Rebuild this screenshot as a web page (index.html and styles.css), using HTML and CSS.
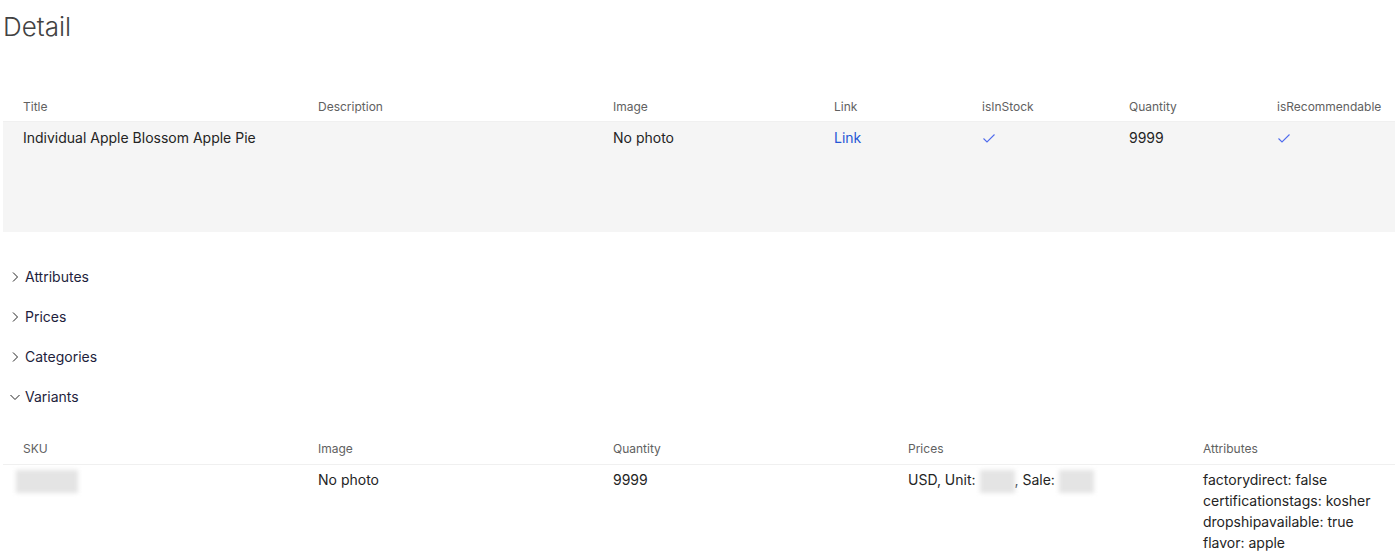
FILE: index.html
```html
<!DOCTYPE html>
<html lang="en">
<head>
  <meta charset="UTF-8" />
  <title>Detail</title>
  <link rel="stylesheet" href="styles.css">
</head>
<body>
  <div class="page">
    <h1 class="page-title">Detail</h1>

    <table class="grid product">
      <colgroup>
        <col style="width:295px"><col style="width:295px"><col style="width:221px">
        <col style="width:148px"><col style="width:147px"><col style="width:148px"><col>
      </colgroup>
      <thead>
        <tr>
          <th>Title</th>
          <th>Description</th>
          <th>Image</th>
          <th>Link</th>
          <th>isInStock</th>
          <th>Quantity</th>
          <th>isRecommendable</th>
        </tr>
      </thead>
      <tbody>
        <tr class="selected">
          <td>Individual Apple Blossom Apple Pie</td>
          <td></td>
          <td>No photo</td>
          <td><a href="#" class="link">Link</a></td>
          <td><svg class="check" width="14" height="14" viewBox="0 0 14 14"><path d="M1.5 7.5 L5 11 L12.5 3.5" fill="none" stroke="currentColor" stroke-width="1.1"/></svg></td>
          <td>9999</td>
          <td><svg class="check" width="14" height="14" viewBox="0 0 14 14"><path d="M1.5 7.5 L5 11 L12.5 3.5" fill="none" stroke="currentColor" stroke-width="1.1"/></svg></td>
        </tr>
      </tbody>
    </table>

    <div class="sections">
      <div class="section-head">
        <svg class="chevron" width="12" height="12" viewBox="0 0 12 12"><path d="M4 1.5 L8.5 6 L4 10.5" fill="none" stroke="currentColor" stroke-width="1"/></svg>
        <span>Attributes</span>
      </div>
      <div class="section-head">
        <svg class="chevron" width="12" height="12" viewBox="0 0 12 12"><path d="M4 1.5 L8.5 6 L4 10.5" fill="none" stroke="currentColor" stroke-width="1"/></svg>
        <span>Prices</span>
      </div>
      <div class="section-head">
        <svg class="chevron" width="12" height="12" viewBox="0 0 12 12"><path d="M4 1.5 L8.5 6 L4 10.5" fill="none" stroke="currentColor" stroke-width="1"/></svg>
        <span>Categories</span>
      </div>
      <div class="section-head">
        <svg class="chevron" width="12" height="12" viewBox="0 0 12 12"><path d="M1.5 4 L6 8.5 L10.5 4" fill="none" stroke="currentColor" stroke-width="1"/></svg>
        <span>Variants</span>
      </div>
    </div>

    <table class="grid variants">
      <colgroup>
        <col style="width:295px"><col style="width:295px"><col style="width:295px">
        <col style="width:295px"><col>
      </colgroup>
      <thead>
        <tr>
          <th>SKU</th>
          <th>Image</th>
          <th>Quantity</th>
          <th>Prices</th>
          <th>Attributes</th>
        </tr>
      </thead>
      <tbody>
        <tr>
          <td><span class="masked sku"></span></td>
          <td>No photo</td>
          <td>9999</td>
          <td>USD, Unit: <span class="masked price"></span>, Sale: <span class="masked price"></span></td>
          <td class="attr-list">
            <div>factorydirect: false</div>
            <div>certificationstags: kosher</div>
            <div>dropshipavailable: true</div>
            <div>flavor: apple</div>
          </td>
        </tr>
      </tbody>
    </table>
  </div>
</body>
</html>
```

FILE: styles.css
```css
body {
  margin: 0;
  background-color: #ffffff;
  font-family: Inter, "Noto Sans", Arial, sans-serif;
  color: #242424;
}

.page {
  padding: 0 0 0 3px;
}

.page-title {
  margin: 0;
  padding-top: 10px;
  font-size: 26px;
  font-weight: 300;
  line-height: 34px;
  color: #424242;
  height: 81px;
}

.grid {
  width: 100%;
  border-collapse: collapse;
  table-layout: fixed;
}

.grid th {
  text-align: left;
  font-size: 12px;
  font-weight: 400;
  color: #616161;
  height: 30px;
  padding: 0 20px;
  border-bottom: 1px solid #f0f0f0;
  vertical-align: middle;
}

.grid td {
  font-size: 14px;
  line-height: 20px;
  padding: 6px 20px 0;
  vertical-align: top;
}

.product tbody tr {
  height: 110px;
  background-color: #f5f5f5;
}

.link {
  color: #2557d6;
  text-decoration: none;
}

.check {
  color: #4f6bed;
  margin-top: 3px;
}

.sections {
  padding: 25px 0 17px;
}

.section-head {
  display: flex;
  align-items: center;
  height: 40px;
  gap: 4px;
  padding-left: 6px;
  font-size: 14px;
  color: #1e1e3c;
}

.chevron {
  color: #242424;
}

.variants td {
  padding-top: 5px;
}

.variants .attr-list {
  line-height: 21px;
  padding-top: 4px;
}

.masked {
  display: inline-block;
  vertical-align: middle;
  height: 23px;
  background-color: #e4e4e4;
  filter: blur(2px);
}

.sku {
  width: 62px;
  margin-left: -7px;
}

.price {
  width: 35px;
}
```
